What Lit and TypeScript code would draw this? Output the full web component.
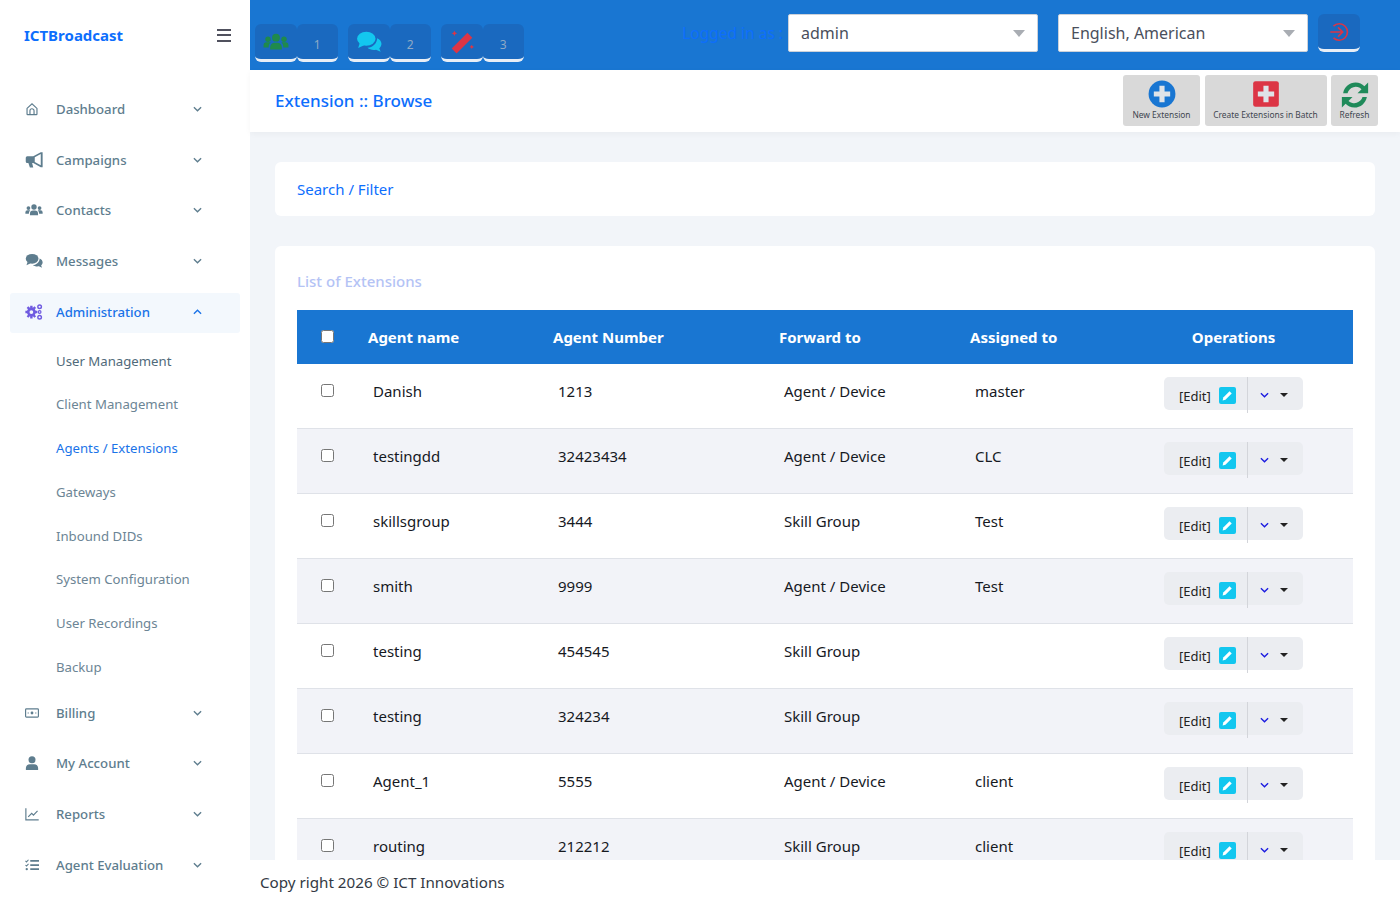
import { LitElement, css, html, svg } from "lit";
import { customElement } from "lit/decorators.js";

// sidebar + header icons, drawn by hand on a 24 box
const icons: Record<string, unknown> = {
  home: svg`<path d="M3.500 11 12 3l8.500 8v9.500a1 1 0 0 1-1 1h-15a1 1 0 0 1-1-1z" fill="none" stroke="currentColor" stroke-width="2"/><path d="M8.500 21.500V15a3.500 3.500 0 0 1 7 0v6.500" fill="none" stroke="currentColor" stroke-width="2"/>`,
  bullhorn: svg`<path d="M1 9a2 2 0 0 1 2-2h8l10-5.500h2.500v20H21l-10-5.500H9.500l1.500 6H6.500L4.500 16H3a2 2 0 0 1-2-2z" fill="currentColor"/><path d="M13 8.400v6.200l8 4.300V4.100z" fill="#fff"/>`,
  users: svg`<circle cx="12" cy="8" r="3.600" fill="currentColor"/><circle cx="4.600" cy="9.400" r="2.500" fill="currentColor"/><circle cx="19.400" cy="9.400" r="2.500" fill="currentColor"/><path d="M6.600 19v-2.200a4.200 4.200 0 0 1 4.200-4.200h2.400a4.200 4.200 0 0 1 4.200 4.200V19z" fill="currentColor"/><path d="M5.200 17H.5v-2a2.800 2.800 0 0 1 2.800-2.800h2.600c.5 0 .8.1 1.100.3-1.300.9-1.800 2.600-1.800 4.500zM18.800 17h4.700v-2a2.800 2.800 0 0 0-2.800-2.800h-2.600c-.5 0-.8.1-1.100.3 1.300.9 1.800 2.600 1.800 4.500z" fill="currentColor"/>`,
  comments: svg`<ellipse cx="9.500" cy="9" rx="8.500" ry="6.500" fill="currentColor"/><path d="M3.500 13 2 17.500l5.500-2.500z" fill="currentColor"/><path d="M19.500 8.500c2.500 1 4 3 4 5.200 0 1.700-.8 3.100-2 4.200l1.300 3.100-4.300-1.900c-2.900.6-6-.1-7.900-1.800 4.900-.2 8.900-4.100 8.900-8.800z" fill="currentColor"/>`,
  cogs: svg`<circle cx="8.500" cy="12" r="4.200" fill="none" stroke="currentColor" stroke-width="3.400"/><path d="M6.900 3.500h3.200V7H6.900zM6.900 17h3.200v3.500H6.900zM.5 10.400H4v3.200H.5zM13 10.400h3.500v3.200H13zM2.200 6.500l2.200-2.200 2.300 2.300-2.200 2.200zM10.300 17.400l2.200-2.200 2.300 2.300-2.200 2.200zM2.200 17.500l2.300-2.300 2.200 2.200-2.300 2.300zM10.300 6.600l2.300-2.300 2.200 2.200-2.300 2.300z" fill="currentColor"/><circle cx="19.500" cy="5" r="2.400" fill="none" stroke="currentColor" stroke-width="1.900"/><circle cx="19.500" cy="12" r="1.800" fill="none" stroke="currentColor" stroke-width="1.600"/><circle cx="19.500" cy="19" r="2.400" fill="none" stroke="currentColor" stroke-width="1.900"/>`,
  billing: svg`<rect x="1" y="5" width="22" height="14" rx="1.500" fill="none" stroke="currentColor" stroke-width="2"/><circle cx="12" cy="12" r="2.400" fill="currentColor"/><path d="M4.500 12h2M17.500 12h2" stroke="currentColor" stroke-width="2"/>`,
  user: svg`<circle cx="12" cy="6.500" r="6" fill="currentColor"/><path d="M1.500 24v-3.500A7 7 0 0 1 8.500 14h7a7 7 0 0 1 7 6.500V24z" fill="currentColor"/>`,
  chart: svg`<path d="M1.500 2v20h22" fill="none" stroke="currentColor" stroke-width="2"/><path d="M5.500 17l6-6 3 3 7-7.500" fill="none" stroke="currentColor" stroke-width="2"/>`,
  tasks: svg`<path d="M9 5h15M9 12h15M9 19h15" stroke="currentColor" stroke-width="3"/><path d="M.8 5l1.800 1.800L6 3" fill="none" stroke="currentColor" stroke-width="1.800"/><path d="M.8 12l1.800 1.800L6 10" fill="none" stroke="currentColor" stroke-width="1.800"/><circle cx="3" cy="19" r="2" fill="currentColor"/>`,
};

interface NavItem {
  label: string;
  icon: string;
  size?: "sm";
  active?: boolean;
}

const topNav: NavItem[] = [
  { label: "Dashboard", icon: "home", size: "sm" },
  { label: "Campaigns", icon: "bullhorn" },
  { label: "Contacts", icon: "users" },
  { label: "Messages", icon: "comments" },
  { label: "Administration", icon: "cogs", active: true },
];

const subNav = [
  "User Management",
  "Client Management",
  "Agents / Extensions",
  "Gateways",
  "Inbound DIDs",
  "System Configuration",
  "User Recordings",
  "Backup",
];

const bottomNav: NavItem[] = [
  { label: "Billing", icon: "billing", size: "sm" },
  { label: "My Account", icon: "user", size: "sm" },
  { label: "Reports", icon: "chart", size: "sm" },
  { label: "Agent Evaluation", icon: "tasks", size: "sm" },
];

const rows = [
  ["Danish", "1213", "Agent / Device", "master"],
  ["testingdd", "32423434", "Agent / Device", "CLC"],
  ["skillsgroup", "3444", "Skill Group", "Test"],
  ["smith", "9999", "Agent / Device", "Test"],
  ["testing", "454545", "Skill Group", ""],
  ["testing", "324234", "Skill Group", ""],
  ["Agent_1", "5555", "Agent / Device", "client"],
  ["routing", "212212", "Skill Group", "client"],
];

const chevron = (up = false) => html`<svg class="chev" viewBox="0 0 10 6" width="9" height="6">
  <path d=${up ? "M1 5l4-4 4 4" : "M1 1l4 4 4-4"} fill="none" stroke="currentColor" stroke-width="1.500"/>
</svg>`;

@customElement("app-root")
export class AppRoot extends LitElement {
  static styles = css`
    :host {
      display: flex;
      height: 900px;
      overflow: hidden;
      font-family: "Noto Sans", "Open Sans", sans-serif;
      background: #f2f5f9;
    }
    .sidebar {
      width: 250px;
      flex: none;
      background: #fff;
      padding: 0 10px;
      box-sizing: border-box;
    }
    .brand {
      display: flex;
      align-items: center;
      justify-content: space-between;
      height: 70px;
      padding: 0 9px 0 14px;
      font-size: 15px;
      font-weight: 700;
      color: #0d6efd;
    }
    .burger {
      width: 14px;
      height: 13px;
      border-top: 2px solid #50515e;
      border-bottom: 2px solid #50515e;
      position: relative;
      box-sizing: border-box;
    }
    .burger::after {
      content: "";
      position: absolute;
      left: 0;
      right: 0;
      top: 3.500px;
      height: 2px;
      background: #50515e;
    }
    .menu {
      display: flex;
      flex-direction: column;
      padding-top: 19px;
    }
    .nav {
      display: flex;
      flex: none;
      align-items: center;
      height: 40px;
      margin-bottom: 10.700px;
      border-radius: 3px;
      padding: 0 38px 0 15px;
      font-size: 13.200px;
      font-weight: 500;
      color: #5e7d8e;
    }
    .nav.active {
      background: #f3f8fd;
      color: #1a73e8;
      margin-top: 1px;
      margin-bottom: 6px;
      padding-bottom: 1px;
      box-sizing: border-box;
    }
    .nav.active .ico {
      color: #6f5be0;
    }
    .ico {
      width: 19px;
      height: 18px;
      margin-right: 12px;
      flex: none;
      display: flex;
      align-items: center;
    }
    .ico svg {
      width: 18px;
      height: 18px;
      display: block;
    }
    .ico.sm svg {
      width: 14px;
      height: 14px;
    }
    .nav .label {
      flex: 1;
    }
    .chev {
      flex: none;
    }
    .sub {
      display: flex;
      align-items: center;
      height: 43.750px;
      padding-left: 46px;
      font-size: 13.200px;
      color: #6c8595;
    }
    .sub.first {
      color: #506a7a;
    }
    .sub.current {
      color: #1a73e8;
    }
    .subs {
      margin-bottom: 4px;
    }
    .main {
      flex: 1;
      min-width: 0;
      display: flex;
      flex-direction: column;
    }
    .topbar {
      height: 70px;
      flex: none;
      background: #1976d2;
      display: flex;
      align-items: flex-start;
      padding: 0 40px 0 5px;
      box-sizing: border-box;
    }
    .quick {
      display: flex;
      gap: 10px;
      padding-top: 24px;
    }
    .qgroup {
      display: flex;
    }
    .qbtn {
      width: 41.500px;
      height: 38px;
      box-sizing: border-box;
      background: #1a69bf;
      border-bottom: 3px solid #e8eef6;
      border-radius: 6px;
      display: flex;
      align-items: center;
      justify-content: center;
      font-size: 12px;
      color: #8fa9c6;
      padding-top: 6px;
    }
    .qbtn svg {
      width: 26px;
      height: 26px;
      margin-top: -6px;
    }
    .who {
      margin-left: auto;
      display: flex;
      align-items: center;
      height: 38px;
      margin-top: 14px;
      gap: 20px;
    }
    .who .as {
      color: #0d6efd;
      font-size: 15.500px;
      margin-right: -15px;
    }
    .sel {
      width: 250px;
      height: 38px;
      box-sizing: border-box;
      background: #fff;
      border: 1px solid #ccd1d9;
      border-radius: 2px;
      display: flex;
      align-items: center;
      justify-content: space-between;
      padding: 0 12px;
      font-size: 16px;
      color: #4a4f5c;
    }
    .sel::after {
      content: "";
      border: 6px solid transparent;
      border-top: 7px solid #a9adb3;
      border-bottom: 0;
    }
    .logout {
      width: 42px;
      height: 38px;
      margin-left: -10px;
      box-sizing: border-box;
      background: #1a69bf;
      border-bottom: 3px solid #e8eef6;
      border-radius: 6px;
      display: flex;
      align-items: center;
      justify-content: center;
    }
    .subhead {
      height: 62px;
      flex: none;
      background: #fff;
      display: flex;
      align-items: center;
      justify-content: space-between;
      padding: 0 22px 2px 25px;
      box-sizing: border-box;
      box-shadow: 0 2px 6px rgba(0, 0, 0, 0.04);
      position: relative;
    }
    .subhead h1 {
      margin: 0;
      font-size: 17px;
      font-weight: 500;
      color: #0d6efd;
    }
    .actions {
      display: flex;
      gap: 4.500px;
    }
    .act {
      height: 51px;
      background: #d9d9d9;
      border-radius: 3px;
      padding-top: 5px;
      box-sizing: border-box;
      display: flex;
      flex-direction: column;
      align-items: center;
      font-size: 8.400px;
      line-height: 14px;
      color: #3f4650;
      white-space: nowrap;
    }
    .act.new {
      width: 77px;
    }
    .act.batch {
      width: 122px;
    }
    .act.refresh {
      width: 47px;
    }
    .act svg {
      width: 28px;
      height: 28px;
    }
    .act.refresh svg {
      width: 30px;
      height: 30px;
      margin-bottom: -2px;
    }
    .content {
      flex: 1;
      min-height: 0;
      overflow: hidden;
      padding: 30px 25px 0;
    }
    .card {
      background: #fff;
      border-radius: 6px;
      padding: 0 22px;
    }
    .filter {
      height: 54px;
      display: flex;
      align-items: center;
      font-size: 15px;
      color: #0d6efd;
      margin-bottom: 30px;
    }
    .list {
      padding-top: 24px;
    }
    .list h2 {
      margin: 0 0 18px;
      font-size: 15px;
      line-height: 22px;
      font-weight: 500;
      color: #b4c3f5;
    }
    table {
      width: 100%;
      table-layout: fixed;
      border-collapse: separate;
      border-spacing: 0;
      font-size: 15px;
      color: #16191f;
    }
    th {
      height: 54px;
      box-sizing: border-box;
      background: #1976d2;
      color: #fff;
      font-size: 15px;
      font-weight: 700;
      text-align: left;
      padding: 0 0 1px 15px;
    }
    th.ops {
      text-align: center;
      padding: 0 0 1px;
    }
    td {
      height: 65px;
      box-sizing: border-box;
      padding: 0 0 10px 20px;
      border-bottom: 1px solid #dfe2e8;
    }
    th.pick,
    td.pick {
      padding: 0 0 0 24px;
    }
    td.pick {
      padding-bottom: 12px;
    }
    th.pick {
      padding-bottom: 2px;
    }
    input {
      margin: 0;
      width: 13px;
      height: 13px;
      display: block;
    }
    tr:nth-child(even) td {
      background: #f2f3f8;
    }
    td.opcell {
      padding: 0 0 6px 50px;
    }
    .opgroup {
      display: flex;
      align-items: center;
      width: 139px;
      height: 33px;
      background: #ebedf1;
      border-radius: 5px;
      box-sizing: border-box;
    }
    .edit {
      width: 84px;
      display: flex;
      align-items: center;
      gap: 8px;
      padding-left: 15px;
      padding-top: 2px;
      box-sizing: border-box;
      font-size: 13px;
      color: #222;
      border-right: 1px solid #d3d5da;
      margin-bottom: -3px;
      height: 36px;
    }
    .pen {
      width: 17px;
      height: 17px;
      background: #13c7ef;
      border-radius: 2px;
      display: flex;
      align-items: center;
      justify-content: center;
    }
    .more {
      display: flex;
      align-items: center;
      gap: 11px;
      padding-left: 12px;
      padding-top: 3px;
      color: #1a1ae0;
    }
    .caret {
      border: 4px solid transparent;
      border-top: 4px solid #222;
      border-bottom: 0;
    }
    .footer {
      height: 40px;
      flex: none;
      background: #fff;
      display: flex;
      align-items: center;
      padding: 4px 0 0 10px;
      box-sizing: border-box;
      font-size: 15.200px;
      color: #333a44;
    }
  `;

  private _nav(item: NavItem) {
    return html`<div class="nav ${item.active ? "active" : ""}">
      <span class="ico ${item.size ?? ""}"><svg viewBox="0 0 24 24">${icons[item.icon]}</svg></span>
      <span class="label">${item.label}</span>
      ${chevron(item.active)}
    </div>`;
  }

  private _quick(icon: unknown, n: number) {
    return html`<div class="qgroup">
      <div class="qbtn">${icon}</div>
      <div class="qbtn">${n}</div>
    </div>`;
  }

  protected render() {
    return html`
      <aside class="sidebar">
        <div class="brand"><span>ICTBroadcast</span><span class="burger"></span></div>
        <div class="menu">
          ${topNav.map((item) => this._nav(item))}
          <div class="subs">
            ${subNav.map(
              (s, i) =>
                html`<div class="sub ${i === 0 ? "first" : ""} ${s === "Agents / Extensions" ? "current" : ""}">${s}</div>`,
            )}
          </div>
          ${bottomNav.map((item) => this._nav(item))}
        </div>
      </aside>
      <div class="main">
        <header class="topbar">
          <div class="quick">
            ${this._quick(html`<svg viewBox="0 0 24 24" style="color:#1f8a4c">${icons.users}</svg>`, 1)}
            ${this._quick(html`<svg viewBox="0 0 24 24" style="color:#13c7ef">${icons.comments}</svg>`, 2)}
            ${this._quick(
              html`<svg viewBox="0 0 24 24"><path d="M2.500 18 17 3.500l4.500 4.500L7 22.500z" fill="#dc3545"/><path d="M5 1.500l.8 1.700 1.700.8-1.700.8L5 6.500l-.8-1.700L2.500 4l1.700-.8zM21 14.500l.7 1.300 1.300.7-1.300.7-.7 1.300-.7-1.300-1.300-.7 1.300-.7z" fill="#dc3545"/></svg>`,
              3,
            )}
          </div>
          <div class="who">
            <span class="as">Logged in as :</span>
            <div class="sel">admin</div>
            <div class="sel">English, American</div>
            <div class="logout">
              <svg viewBox="0 0 24 24" width="22" height="22" fill="none" stroke="#dc3545" stroke-width="1.800">
                <path d="M6 5.500A9 9 0 1 1 6 18.500"/>
                <path d="M2.500 12H16M11 7l5 5-5 5"/>
              </svg>
            </div>
          </div>
        </header>
        <div class="subhead">
          <h1>Extension :: Browse</h1>
          <div class="actions">
            <div class="act new">
              <svg viewBox="0 0 24 24"><circle cx="12" cy="12" r="11.500" fill="#1976d2"/><path d="M9.800 5h4.400v4.800H19v4.400h-4.800V19H9.800v-4.800H5V9.800h4.800z" fill="#dfe3e8"/></svg>
              New Extension
            </div>
            <div class="act batch">
              <svg viewBox="0 0 24 24"><rect x="1" y="1" width="22" height="22" rx="2" fill="#dc3545"/><path d="M9.800 5h4.400v4.800H19v4.400h-4.800V19H9.800v-4.800H5V9.800h4.800z" fill="#dfe3e8"/></svg>
              Create Extensions in Batch
            </div>
            <div class="act refresh">
              <svg viewBox="0 0 24 24" fill="#1f8a5a">
                <path d="M2.500 10.500C3.500 5.500 7.500 2 12.500 2c2.900 0 5.300 1.200 7 3L22.500 2v8.500H14l3.200-3.200A6.800 6.800 0 0 0 6 10.500z"/>
                <path d="M21.500 13.500c-1 5-5 8.500-10 8.500-2.900 0-5.300-1.200-7-3l-3 3v-8.500H10l-3.200 3.200A6.800 6.800 0 0 0 18 13.500z"/>
              </svg>
              Refresh
            </div>
          </div>
        </div>
        <div class="content">
          <div class="card filter">Search / Filter</div>
          <div class="card list">
            <h2>List of Extensions</h2>
            <table>
              <colgroup>
                <col style="width:56px" /><col style="width:185px" /><col style="width:226px" /><col style="width:191px" /><col style="width:159px" /><col />
              </colgroup>
              <thead>
                <tr>
                  <th class="pick"><input type="checkbox" /></th>
                  <th>Agent name</th>
                  <th>Agent Number</th>
                  <th>Forward to</th>
                  <th>Assigned to</th>
                  <th class="ops">Operations</th>
                </tr>
              </thead>
              <tbody>
                ${rows.map(
                  (r) => html`<tr>
                    <td class="pick"><input type="checkbox" /></td>
                    ${r.map((c) => html`<td>${c}</td>`)}
                    <td class="opcell">
                      <div class="opgroup">
                        <div class="edit">
                          [Edit]
                          <span class="pen">
                            <svg viewBox="0 0 12 12" width="13" height="13"><path d="M1.500 10.500l.6-2.600 5.800-5.800 2 2-5.800 5.800z" fill="#fff"/></svg>
                          </span>
                        </div>
                        <div class="more">${chevron()}<span class="caret"></span></div>
                      </div>
                    </td>
                  </tr>`,
                )}
              </tbody>
            </table>
          </div>
        </div>
        <footer class="footer">Copy right 2026 © ICT Innovations</footer>
      </div>
    `;
  }
}
